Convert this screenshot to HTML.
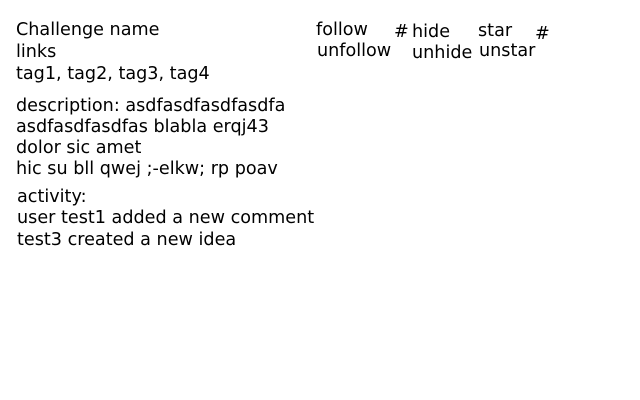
<!DOCTYPE html>
<html><head><style>
body{margin:0;width:640px;height:400px;background:#fff;position:relative;overflow:hidden;font-family:"DejaVu Sans","Liberation Sans",sans-serif;font-size:17.6px;color:#000}
div{position:absolute;line-height:20px;white-space:nowrap}
</style></head><body>
<div style="left:16px;top:20px">Challenge name</div>
<div style="left:16px;top:42px">links</div>
<div style="left:16px;top:64px">tag1, tag2, tag3, tag4</div>
<div style="left:16px;top:96px">description: asdfasdfasdfasdfa</div>
<div style="left:16px;top:117px">asdfasdfasdfas blabla erqj43</div>
<div style="left:16px;top:138px">dolor sic amet</div>
<div style="left:16px;top:159px">hic su bll qwej ;-elkw; rp poav</div>
<div style="left:17px;top:187px">activity:</div>
<div style="left:17px;top:208px">user test1 added a new comment</div>
<div style="left:17px;top:230px">test3 created a new idea</div>
<div style="left:316px;top:20px">follow</div>
<div style="left:317px;top:41px">unfollow</div>
<div style="left:394px;top:22px">#</div>
<div style="left:412px;top:22px">hide</div>
<div style="left:412px;top:43px">unhide</div>
<div style="left:478px;top:21px">star</div>
<div style="left:479px;top:41px">unstar</div>
<div style="left:535px;top:24px">#</div>
</body></html>
